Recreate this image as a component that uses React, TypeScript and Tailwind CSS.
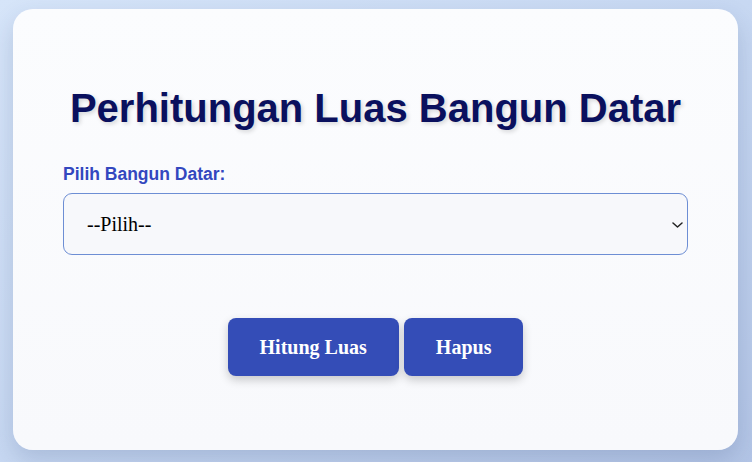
import React from 'react';

export default function App() {
  return (
    <div className="min-h-screen w-full bg-gradient-to-br from-[#d6e5f9] via-[#c7d8f2] to-[#b3c5e6] pt-[9px] pb-[12px] px-[13px]">
      <div className="w-[725px] h-[441px] rounded-[20px] bg-gradient-to-b from-[#fbfcfe] to-[#f8f9fc] shadow-[0_10px_25px_rgba(40,60,110,0.18)] px-[50px] pt-[76px] flex flex-col">
        <h1 className="text-center text-[40px] leading-[46px] font-bold text-[#0a105e] [font-family:'Liberation_Sans',Arial,sans-serif] [text-shadow:2px_2px_4px_rgba(0,0,0,0.15)]">
          Perhitungan Luas Bangun Datar
        </h1>

        <label className="block mt-[33px] text-[17.5px] leading-[20px] font-bold text-[#3347bf] [font-family:'Liberation_Sans',Arial,sans-serif]">
          Pilih Bangun Datar:
        </label>

        <div className="relative mt-[9px]">
          <select
            defaultValue=""
            className="w-full h-[62px] appearance-none rounded-[9px] border border-[#6d8ed4] bg-[#f7f8fb] pl-[23px] pr-10 text-[20px] text-black outline-none [font-family:'Liberation_Serif','Times_New_Roman',serif]"
          >
            <option value="">--Pilih--</option>
            <option value="persegi">Persegi</option>
            <option value="persegi-panjang">Persegi Panjang</option>
            <option value="segitiga">Segitiga</option>
            <option value="lingkaran">Lingkaran</option>
          </select>
          <svg
            className="pointer-events-none absolute right-[5px] top-[29px]"
            width="11"
            height="6"
            viewBox="0 0 11 6"
            fill="none"
          >
            <path d="M1 1l4.5 4 4.5-4" stroke="#222" strokeWidth="1.5" strokeLinecap="round" strokeLinejoin="round" />
          </svg>
        </div>

        <div className="mt-[63px] flex justify-center gap-[5px]">
          <button className="h-[58px] px-8 rounded-lg bg-[#344db7] text-white text-[20px] font-bold shadow-[0_4px_10px_rgba(0,0,0,0.2)] [font-family:'Liberation_Serif','Times_New_Roman',serif]">
            Hitung Luas
          </button>
          <button className="h-[58px] px-8 rounded-lg bg-[#344db7] text-white text-[20px] font-bold shadow-[0_4px_10px_rgba(0,0,0,0.2)] [font-family:'Liberation_Serif','Times_New_Roman',serif]">
            Hapus
          </button>
        </div>
      </div>
    </div>
  );
}
